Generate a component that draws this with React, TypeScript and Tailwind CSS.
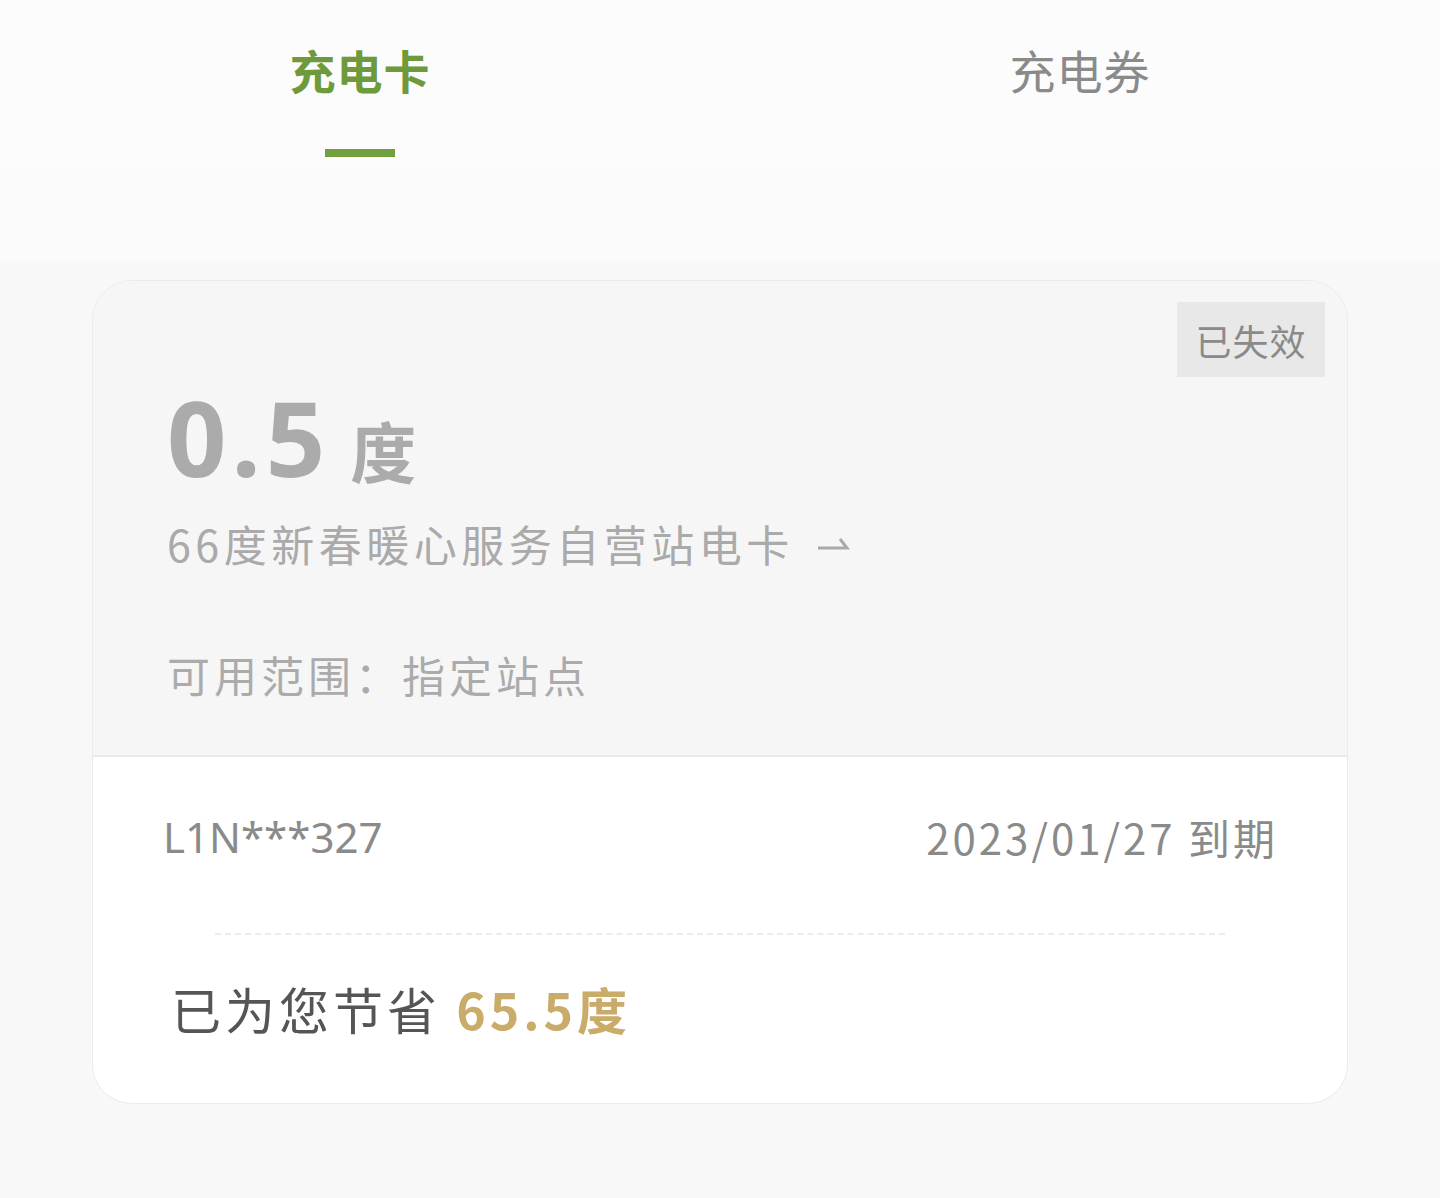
export default function App() {
  const font = { fontFamily: '"Noto Sans CJK SC", "Noto Sans", sans-serif' }
  return (
    <div className="w-[1440px] h-[1198px] bg-[#f8f8f8] flex flex-col" style={font}>
      <div className="h-[163px] bg-[#fcfcfc] flex">
        <div className="flex-1 flex flex-col items-center pt-[38px]">
          <div className="text-[46px] leading-[62px] font-bold text-[#6f9a3c] tracking-[1px]">充电卡</div>
          <div className="mt-[49px] w-[70px] h-[8px] bg-[#73a03f]" />
        </div>
        <div className="flex-1 flex flex-col items-center pt-[38px]">
          <div className="text-[46px] leading-[62px] text-[#8a8a8a] tracking-[1px]">充电券</div>
        </div>
      </div>
      <div className="h-[100px] bg-[#fbfbfb]" />
      <div className="px-[92px] pt-[17px]">
        <div className="rounded-[40px] overflow-hidden border border-[#ebebeb]">
          <div className="bg-[#f6f6f6] relative pl-[74px] pt-[104px] pb-[52px] border-b-2 border-[#ebebeb]">
            <div className="absolute right-[22px] top-[21px] w-[148px] h-[75px] bg-[#e8e8e8] flex items-center justify-center text-[36px] text-[#8a8a8a] tracking-[1px]">
              已失效
            </div>
            <div className="flex items-end text-[#ababab] h-[100px]">
              <span className="text-[104px] leading-[96px] font-bold tracking-[5px]" style={{ fontFamily: '"Noto Sans", sans-serif' }}>0.5</span>
              <span className="ml-[20px] text-[66px] leading-[72px] font-bold">度</span>
            </div>
            <div className="mt-[30px] flex items-center text-[43px] leading-[56px] text-[#aaaaaa] tracking-[4.5px]">
              <span>66度新春暖心服务自营站电卡</span>
              <svg className="ml-[22px]" width="34" height="20" viewBox="0 0 34 20" fill="none" stroke="#aaaaaa" strokeWidth="3">
                <path d="M2 15H31L24 6" />
              </svg>
            </div>
            <div className="mt-[74px] text-[43px] leading-[58px] text-[#ababab] tracking-[4px]">可用范围：指定站点</div>
          </div>
          <div className="bg-white pt-[50px] pb-[62px]">
            <div className="flex justify-between pl-[70px] pr-[72px] text-[42px] leading-[60px] text-[#8a8a8a]">
              <span style={{ fontFamily: '"Noto Sans", sans-serif' }}>L1N***327</span>
              <span className="tracking-[3px] -mr-[3px]">2023/01/27 到期</span>
            </div>
            <div className="mt-[66px] mx-[122px] border-t-2 border-dashed border-[#ececec]" />
            <div className="mt-[40px] pl-[78px] text-[50px] leading-[66px] text-[#555555] tracking-[4px]">
              已为您节省 <span className="font-bold text-[#c9ab6a]">65.5度</span>
            </div>
          </div>
        </div>
      </div>
    </div>
  )
}
